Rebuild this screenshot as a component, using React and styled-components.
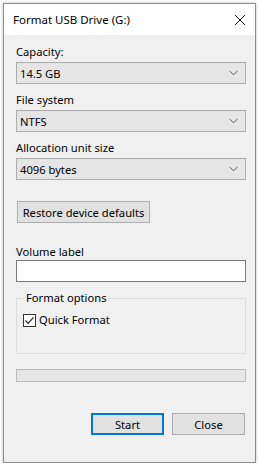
import React from 'react';
import styled, { createGlobalStyle } from 'styled-components';

const GlobalStyle = createGlobalStyle`
  html, body {
    margin: 0;
    padding: 0;
    background: #ffffff;
  }
  body {
    font-family: "Noto Sans", "Liberation Sans", sans-serif;
    font-size: 11.2px;
    color: #000;
  }
`;

const Window = styled.div`
  width: 253px;
  height: 460px;
  margin: 3px 0 0 3px;
  box-sizing: border-box;
  border: 1px solid #8c8c8c;
  background: #f0f0f0;
  box-shadow: 0 0 3px rgba(0, 0, 0, 0.25);
  display: flex;
  flex-direction: column;
`;

const TitleBar = styled.div`
  height: 31px;
  background: #ffffff;
  display: flex;
  align-items: center;
  justify-content: space-between;
  padding: 0 9px 0 9px;
  flex-shrink: 0;
`;

const Title = styled.span`
  font-size: 11.5px;
  line-height: 16px;
`;

const CloseX = styled.svg`
  width: 10px;
  height: 10px;
  margin-right: 1px;
`;

const Body = styled.div`
  display: flex;
  flex-direction: column;
  padding: 9px 9px 0 12px;
`;

const Label = styled.div`
  line-height: 16px;
  margin-top: ${(p) => p.$mt || 0}px;
  margin-bottom: ${(p) => (p.$mb === undefined ? 2 : p.$mb)}px;
`;

const Select = styled.div`
  height: 22px;
  box-sizing: border-box;
  border: 1px solid #adadad;
  background: #e5e5e5;
  display: flex;
  align-items: center;
  justify-content: space-between;
  padding: 0 7px 0 3px;
`;

const Chevron = styled.svg`
  width: 9px;
  height: 6px;
`;

const Button = styled.button`
  font-family: inherit;
  font-size: 11.2px;
  color: #000;
  height: 22px;
  box-sizing: border-box;
  background: #e1e1e1;
  border: ${(p) => (p.$primary ? '2px solid #0078d7' : '1px solid #adadad')};
  padding: 0;
  width: ${(p) => p.$w}px;
  margin: 0;
`;

const RestoreRow = styled.div`
  display: flex;
  margin-top: 21px;
  padding-left: 1px;
`;

const TextInput = styled.div`
  height: 22px;
  box-sizing: border-box;
  border: 1px solid #7a7a7a;
  background: #ffffff;
`;

const Group = styled.fieldset`
  margin: 8px 0 0 0;
  padding: 6px 6px 0 6px;
  height: 64px;
  box-sizing: border-box;
  border: 1px solid #dcdcdc;
  min-width: 0;
`;

const Legend = styled.legend`
  padding: 0 2px;
  margin-left: 1px;
  line-height: 16px;
`;

const CheckRow = styled.label`
  display: flex;
  align-items: center;
  gap: 3px;
  line-height: 16px;
`;

const CheckBox = styled.span`
  width: 13px;
  height: 13px;
  box-sizing: border-box;
  border: 1px solid #333333;
  background: #ffffff;
  display: flex;
  align-items: center;
  justify-content: center;
`;

const Progress = styled.div`
  height: 13px;
  box-sizing: border-box;
  margin-top: 15px;
  border: 1px solid #bcbcbc;
  background: #e6e6e6;
`;

const ButtonRow = styled.div`
  display: flex;
  justify-content: flex-end;
  gap: 8px;
  margin-top: 31px;
  padding-right: 1px;
`;

const Dropdown = ({ value }) => (
  <Select>
    <span>{value}</span>
    <Chevron viewBox="0 0 9 6">
      <path d="M0.5 0.8 L4.5 4.8 L8.5 0.8" fill="none" stroke="#5a5a5a" strokeWidth="1" />
    </Chevron>
  </Select>
);

export default function App() {
  return (
    <>
      <GlobalStyle />
      <Window>
        <TitleBar>
          <Title>Format USB Drive (G:)</Title>
          <CloseX viewBox="0 0 10 10">
            <path d="M0 0 L10 10 M10 0 L0 10" stroke="#111" strokeWidth="1" />
          </CloseX>
        </TitleBar>
        <Body>
          <Label>Capacity:</Label>
          <Dropdown value="14.5 GB" />
          <Label $mt={8}>File system</Label>
          <Dropdown value="NTFS" />
          <Label $mt={8}>Allocation unit size</Label>
          <Dropdown value="4096 bytes" />
          <RestoreRow>
            <Button $w={133}>Restore device defaults</Button>
          </RestoreRow>
          <Label $mt={21} $mb={0}>Volume label</Label>
          <TextInput />
          <Group>
            <Legend>Format options</Legend>
            <CheckRow>
              <CheckBox>
                <svg width="11" height="11" viewBox="0 0 11 11">
                  <path d="M1.5 5.5 L4.2 8.3 L9.5 2.3" fill="none" stroke="#222" strokeWidth="1.2" />
                </svg>
              </CheckBox>
              Quick Format
            </CheckRow>
          </Group>
          <Progress />
          <ButtonRow>
            <Button $primary $w={73}>Start</Button>
            <Button $w={73}>Close</Button>
          </ButtonRow>
        </Body>
      </Window>
    </>
  );
}
